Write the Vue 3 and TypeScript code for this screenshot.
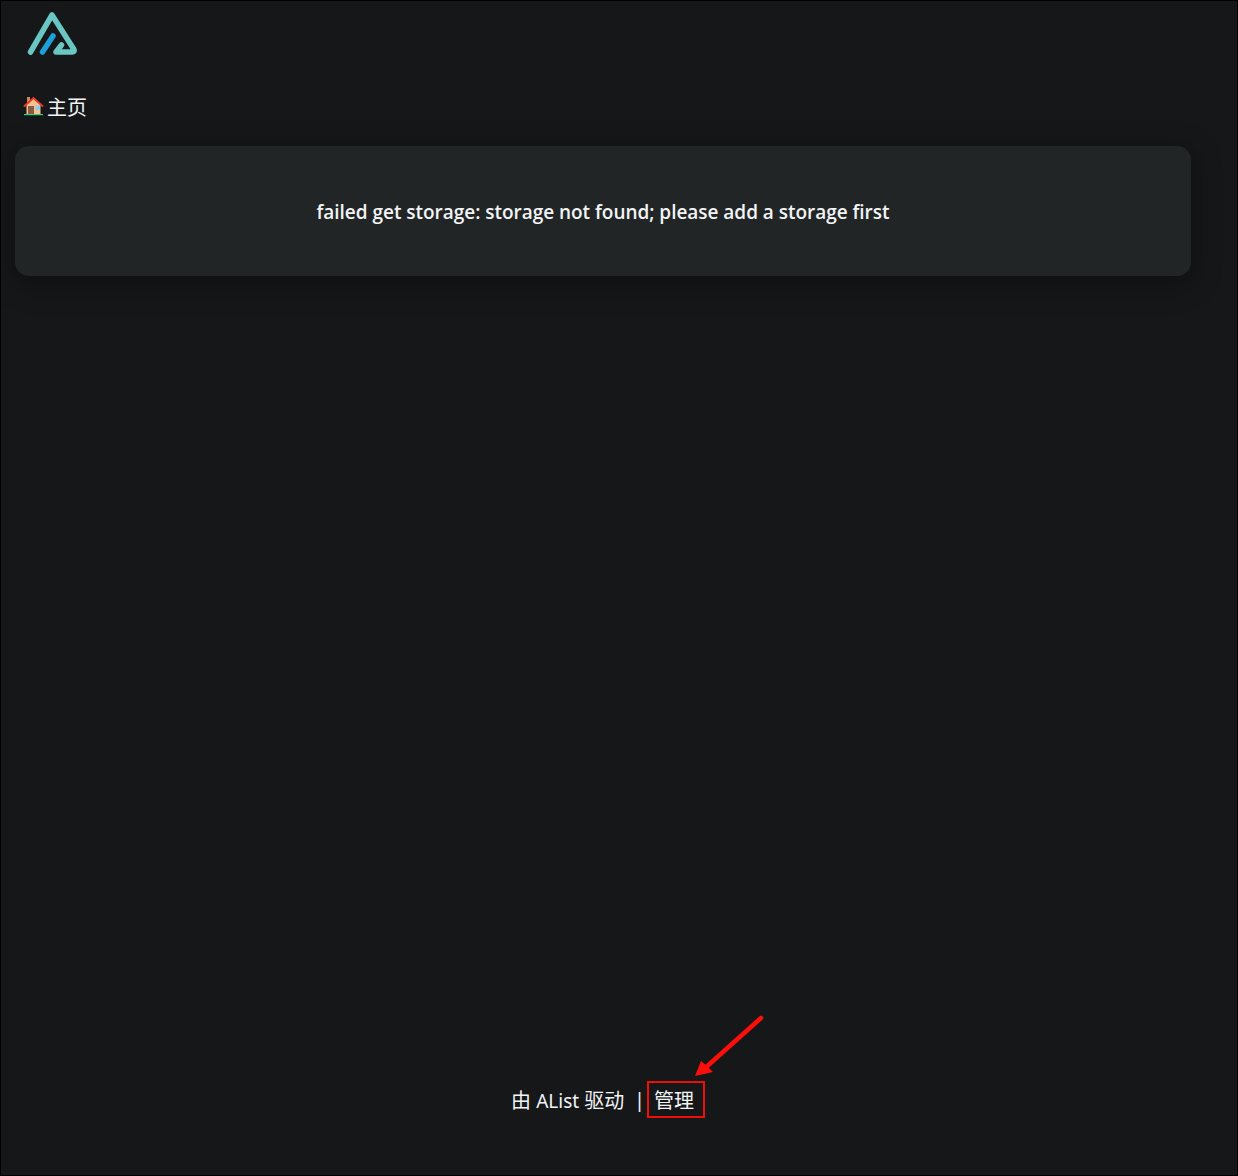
<script setup lang="ts">
const message = "failed get storage: storage not found; please add a storage first";
</script>

<template>
  <div class="page">
    <header class="logo-row">
      <svg class="logo" width="56" height="50" viewBox="0 0 56 50" fill="none" stroke-linecap="round" stroke-linejoin="round">
        <path d="M5.5 44 L27 7 L49 41.5 Q50 44 47 44 L31 44 L36.5 37" stroke="#69c6c2" stroke-width="5.5" />
        <path d="M17.5 44 L28 28" stroke="#1d9fd8" stroke-width="5.5" />
      </svg>
    </header>
    <nav class="crumb">
      <svg class="house" width="21" height="20" viewBox="0 0 21 20">
        <rect x="4" y="1" width="3" height="7" fill="#c98a5a" />
        <path d="M3.5 8.5 L10.5 2.5 L17.5 8.5 V18 H3.5 Z" fill="#f6c28b" />
        <path d="M1.5 10 L10.5 2 L19.5 10" fill="none" stroke="#e8382f" stroke-width="2" stroke-linecap="round" />
        <rect x="5" y="10" width="6" height="8" fill="#8a5a44" />
        <rect x="12.5" y="9.5" width="4.5" height="4.5" fill="#8ecbf0" />
        <rect x="1" y="18" width="19" height="1.2" fill="#3ecf7a" />
      </svg>
      <span>主页</span>
    </nav>
    <main class="card">{{ message }}</main>
    <footer class="footer">
      <span class="powered">由 <span class="latin">AList</span> 驱动</span>
      <span class="sep">|</span>
      <span class="manage">
        管理
        <svg class="arrow" width="80" height="76" viewBox="0 0 80 76" fill="none">
          <path d="M70 4 L13 55" stroke="#fb0f0b" stroke-width="4.5" stroke-linecap="round" />
          <path d="M4 62 L10 47 L16 52 L22 58 Z" fill="#fb0f0b" />
        </svg>
      </span>
    </footer>
  </div>
</template>

<style>
html, body { margin: 0; background: #161719; }
</style>

<style scoped>
.page {
  box-sizing: border-box;
  width: 1238px;
  height: 1176px;
  border: 1px solid #000;
  background: #161719;
  color: #f2f4f5;
  font-family: "Open Sans", "Noto Sans", "Noto Sans CJK SC", sans-serif;
  display: flex;
  flex-direction: column;
  padding: 0 14px;
  overflow: hidden;
}
.logo-row { height: 75px; padding: 7px 0 0 10px; box-sizing: border-box; }
.logo { display: block; }
.crumb {
  display: flex;
  align-items: center;
  height: 32px;
  margin-top: 14px;
  padding-left: 8px;
  font-size: 20px;
  font-family: "Noto Sans CJK SC", sans-serif;
}
.house { flex: none; margin-right: 3px; }
.card {
  margin-top: 24px;
  width: 1176px;
  height: 130px;
  box-sizing: border-box;
  border-radius: 14px;
  background: #212526;
  box-shadow: 0 6px 30px rgba(0, 0, 0, 0.4);
  display: flex;
  align-items: center;
  justify-content: center;
  padding-top: 2px;
  font-size: 19px;
  font-weight: 600;
  letter-spacing: -0.03px;
}
.footer {
  margin-top: auto;
  margin-bottom: 58px;
  display: flex;
  align-items: center;
  height: 36px;
  padding-left: 496px;
  font-size: 20px;
  font-family: "Noto Sans", "Noto Sans CJK SC", sans-serif;
}
.powered { width: 123px; white-space: nowrap; }
.latin { font-size: 19px; }
.sep { width: 13px; }
.manage {
  position: relative;
  box-sizing: border-box;
  width: 58px;
  height: 37px;
  border: 2px solid #f00e0a;
  display: flex;
  align-items: center;
  padding-left: 5px;
  font-family: "Noto Sans CJK SC", sans-serif;
}
.arrow { position: absolute; left: 42px; top: -69px; }
</style>
